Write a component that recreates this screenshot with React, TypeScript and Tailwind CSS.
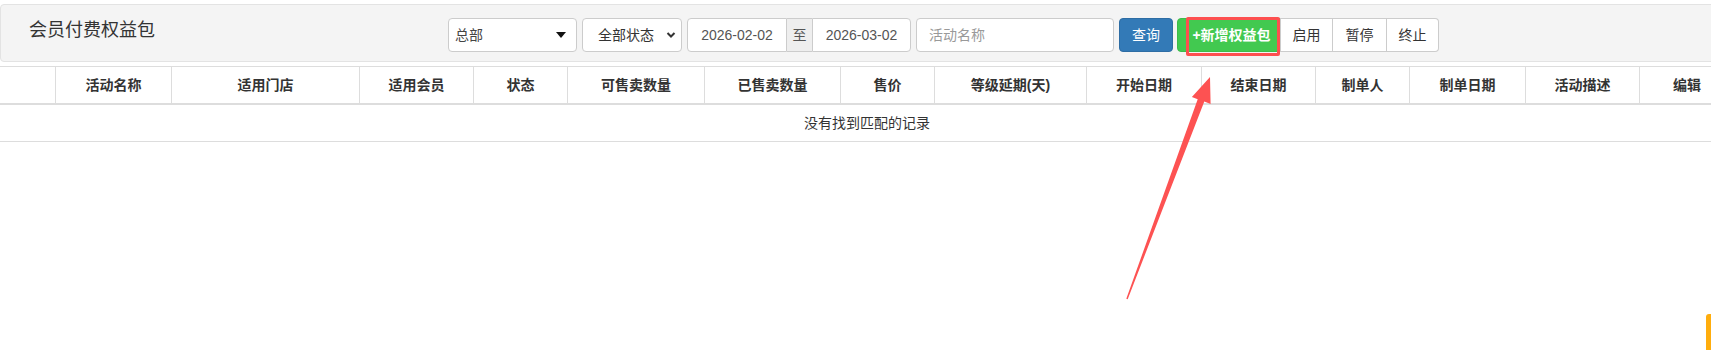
import React from "react";

const cols: { label: string; w: string }[] = [
  { label: "", w: "w-[55px]" },
  { label: "活动名称", w: "w-[116px]" },
  { label: "适用门店", w: "w-[188px]" },
  { label: "适用会员", w: "w-[114px]" },
  { label: "状态", w: "w-[94px]" },
  { label: "可售卖数量", w: "w-[137px]" },
  { label: "已售卖数量", w: "w-[136px]" },
  { label: "售价", w: "w-[94px]" },
  { label: "等级延期(天)", w: "w-[152px]" },
  { label: "开始日期", w: "w-[115px]" },
  { label: "结束日期", w: "w-[114px]" },
  { label: "制单人", w: "w-[94px]" },
  { label: "制单日期", w: "w-[116px]" },
  { label: "活动描述", w: "w-[114px]" },
  { label: "编辑", w: "w-[95px]" },
];

function Toolbar() {
  return (
    <div className="flex mt-[13px] h-[34px] text-[14px]">
      <div className="w-[129px] flex items-center justify-between pl-[6px] pr-[10px] border border-[#ccc] rounded-[4px] bg-white text-[#444]">
        <span>总部</span>
        <span className="w-0 h-0 border-x-[5px] border-x-transparent border-t-[6px] border-t-[#111]" />
      </div>
      <div className="ml-[5px] w-[100px] flex items-center justify-between pl-[15px] pr-[5px] border border-[#ccc] rounded-[4px] bg-white text-[#333]">
        <span>全部状态</span>
        <svg width="10" height="8" viewBox="0 0 10 8">
          <path d="M1.5 2 L5 5.5 L8.5 2" fill="none" stroke="#333" strokeWidth="2" />
        </svg>
      </div>
      <div className="ml-[5px] flex text-[#555]">
        <div className="w-[100px] flex items-center justify-center border border-[#ccc] rounded-l-[4px] bg-white">
          2026-02-02
        </div>
        <div className="w-[25px] flex items-center justify-center border-y border-[#ccc] bg-[#eee]">至</div>
        <div className="w-[99px] flex items-center justify-center border border-[#ccc] rounded-r-[4px] bg-white">
          2026-03-02
        </div>
      </div>
      <div className="ml-[5px] w-[198px] flex items-center pl-[12px] border border-[#ccc] rounded-[4px] bg-white text-[#999]">
        活动名称
      </div>
      <div className="ml-[5px] w-[54px] flex items-center justify-center border border-[#2e6da4] rounded-[4px] bg-[#337ab7] text-white">
        查询
      </div>
      <div className="ml-[4px] flex text-[#333]">
        <div className="w-[103px] flex items-center justify-center pl-[6px] border border-[#3dbb4a] rounded-l-[4px] bg-[#42c950] text-white font-bold">
          +新增权益包
        </div>
        <div className="w-[53px] flex items-center justify-center border border-[#ccc] bg-white">启用</div>
        <div className="w-[54px] flex items-center justify-center border-y border-r border-[#ccc] bg-white">暂停</div>
        <div className="w-[52px] flex items-center justify-center border-y border-r border-[#ccc] rounded-r-[4px] bg-white">
          终止
        </div>
      </div>
    </div>
  );
}

export default function App() {
  return (
    <div
      className="relative w-[1711px] h-[350px] overflow-hidden bg-white text-[#333]"
      style={{ fontFamily: '"Liberation Sans", "Noto Sans CJK SC", sans-serif' }}
    >
      <div className="mt-[4px] w-[1730px] h-[58px] flex border border-[#e3e3e3] rounded-[4px] bg-[#f4f4f4]">
        <div className="w-[447px] shrink-0 pl-[28px] pt-[13px] text-[18px] leading-[24px] text-[#333]">
          会员付费权益包
        </div>
        <Toolbar />
      </div>

      <div className="mt-[4px] w-[1734px]">
        <div className="flex h-[39px] border-t border-b-2 border-[#ddd] text-[14px] font-bold">
          {cols.map((c, i) => (
            <div
              key={i}
              className={`${c.w} shrink-0 flex items-center justify-center ${i > 0 ? "border-l border-[#ddd]" : ""}`}
            >
              {c.label}
            </div>
          ))}
        </div>
        <div className="h-[37px] flex items-center justify-center border-b border-[#ddd] text-[14px]">
          没有找到匹配的记录
        </div>
      </div>

      <div className="absolute left-[1186px] top-[17px] w-[94px] h-[39px] border-[3px] border-[#fd4f4f] rounded-[2px]" />

      <svg className="absolute inset-0 pointer-events-none" width="1711" height="350">
        <polygon
          points="1210,77 1210.6,104 1204.3,101.6 1127.7,299.2 1126.3,298.8 1197.7,99.2 1191.9,96.9"
          fill="#fd5252"
        />
      </svg>

      <div className="absolute right-0 bottom-0 w-[5px] h-[36px] rounded-tl-[3px] bg-[#ffad0d]" />
    </div>
  );
}
